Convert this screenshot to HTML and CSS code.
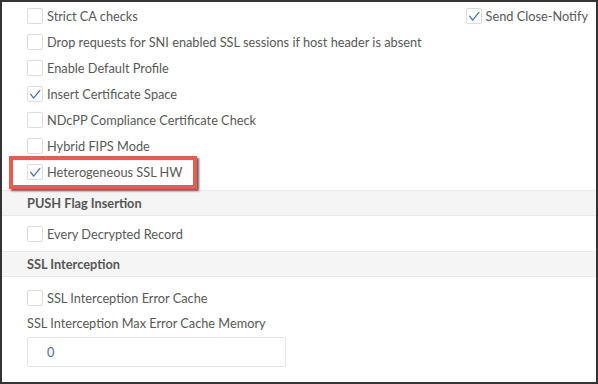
FILE: index.html
```html
<!DOCTYPE html>
<html>
<head>
<meta charset="utf-8">
<link rel="stylesheet" href="styles.css">
</head>
<body>
<div class="frame">
  <div class="group">
    <div class="row top">
      <label class="check"><span class="box"></span><span class="txt">Strict CA checks</span></label>
      <label class="check"><span class="box on"><svg viewBox="0 0 16 16"><path d="M3 8.2 L6.4 12.6 L13.6 3.8"/></svg></span><span class="txt">Send Close-Notify</span></label>
    </div>
    <div class="row"><label class="check"><span class="box"></span><span class="txt">Drop requests for SNI enabled SSL sessions if host header is absent</span></label></div>
    <div class="row"><label class="check"><span class="box"></span><span class="txt">Enable Default Profile</span></label></div>
    <div class="row"><label class="check"><span class="box on"><svg viewBox="0 0 16 16"><path d="M3 8.2 L6.4 12.6 L13.6 3.8"/></svg></span><span class="txt">Insert Certificate Space</span></label></div>
    <div class="row"><label class="check"><span class="box"></span><span class="txt">NDcPP Compliance Certificate Check</span></label></div>
    <div class="row"><label class="check"><span class="box"></span><span class="txt">Hybrid FIPS Mode</span></label></div>
    <div class="row highlight"><label class="check"><span class="box on"><svg viewBox="0 0 16 16"><path d="M3 8.2 L6.4 12.6 L13.6 3.8"/></svg></span><span class="txt">Heterogeneous SSL HW</span></label></div>
  </div>
  <div class="band">PUSH Flag Insertion</div>
  <div class="group g2">
    <div class="row"><label class="check"><span class="box"></span><span class="txt">Every Decrypted Record</span></label></div>
  </div>
  <div class="band">SSL Interception</div>
  <div class="group g3">
    <div class="row"><label class="check"><span class="box"></span><span class="txt">SSL Interception Error Cache</span></label></div>
    <div class="field">
      <div class="flabel">SSL Interception Max Error Cache Memory</div>
      <div class="input">0</div>
    </div>
  </div>
</div>
</body>
</html>
```
FILE: styles.css
```css
html, body {
  margin: 0;
  padding: 0;
  background: #fff;
}
.frame {
  box-sizing: border-box;
  width: 598px;
  height: 384px;
  border: 2px solid #333;
  font-family: Lato, "Open Sans", sans-serif;
  font-size: 12.75px;
  color: #585858;
  overflow: hidden;
  background: #fff;
}
.group {
  padding: 1px 8px 0 25px;
}
.row {
  height: 26px;
  display: flex;
  align-items: center;
  position: relative;
}
.row.top {
  justify-content: space-between;
}
.check {
  display: flex;
  align-items: center;
  gap: 4px;
}
.box {
  box-sizing: border-box;
  width: 16px;
  height: 16px;
  border: 1px solid #dcdcdc;
  border-radius: 2px;
  background: #fff;
  display: block;
}
.box svg {
  display: block;
  width: 14px;
  height: 14px;
}
.box svg path {
  fill: none;
  stroke: #3b72b4;
  stroke-width: 1.4;
  stroke-linecap: round;
  stroke-linejoin: round;
}
.txt {
  line-height: 16px;
  white-space: nowrap;
}
.highlight::after {
  content: "";
  position: absolute;
  left: -18px;
  top: -3px;
  width: 180px;
  height: 25px;
  border: 4px solid #ea5b4d;
  box-shadow: 2px 2px 2px rgba(40, 40, 40, 0.75);
  pointer-events: none;
}
.band {
  margin-top: 5px;
  height: 24px;
  line-height: 24px;
  background: #f5f5f5;
  border-top: 1px solid #e8e8e8;
  border-bottom: 1px solid #e8e8e8;
  padding-left: 25px;
  font-weight: bold;
  color: #555;
}
.g2 {
  padding-top: 5px;
  padding-bottom: 4px;
}
.band + .g2 + .band {
  margin-top: 0;
}
.g3 {
  padding-top: 8px;
}
.field {
  padding-top: 4px;
}
.flabel {
  line-height: 16px;
}
.input {
  box-sizing: border-box;
  margin-top: 6px;
  width: 259px;
  height: 30px;
  border: 1px solid #e3e3e3;
  border-radius: 2px;
  padding-left: 19px;
  line-height: 28px;
  color: #5a6a88;
}
```
